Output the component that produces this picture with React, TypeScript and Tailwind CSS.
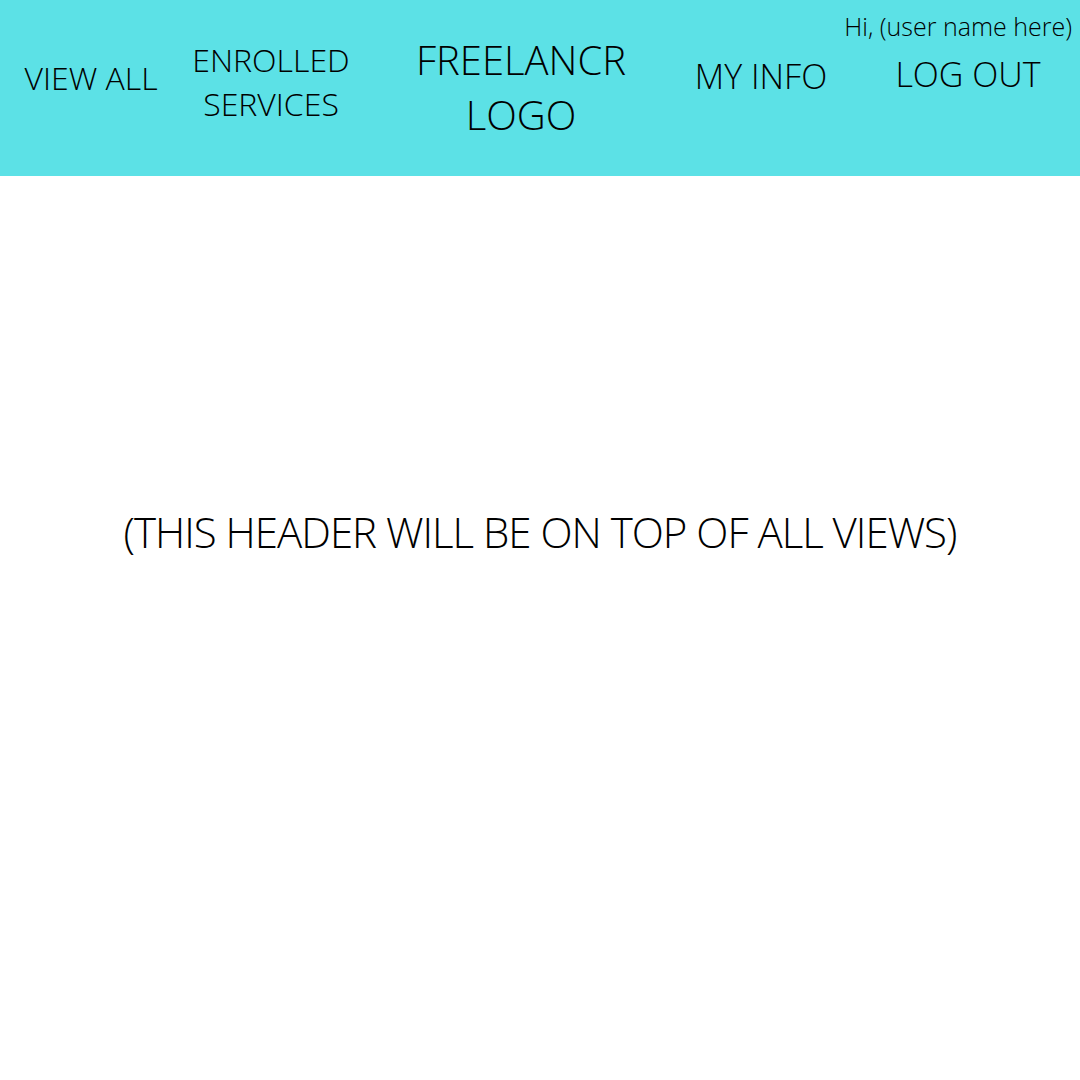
export default function App() {
  return (
    <div className="w-[1080px] h-[1080px] bg-white text-black font-light" style={{ fontFamily: '"Open Sans", "Liberation Sans", sans-serif' }}>
      <header className="relative h-[176px] bg-[#5ce1e6] flex items-start">
        <div className="absolute top-[14px] right-[8px] text-[25px] leading-none">Hi, (user name here)</div>
        <a className="w-[182px] pt-[62px] text-[32px] leading-none text-center">VIEW ALL</a>
        <a className="w-[178px] pt-[38px] text-[32px] leading-[44px] text-center">
          ENROLLED
          <br />
          SERVICES
        </a>
        <div className="w-[322px] pt-[32px] text-[40px] leading-[55px] text-center">
          FREELANCR
          <br />
          LOGO
        </div>
        <a className="w-[158px] pt-[59px] text-[34px] leading-none text-center">MY INFO</a>
        <a className="w-[176px] ml-[40px] pt-[57px] text-[34px] leading-none text-center">LOG OUT</a>
      </header>
      <main className="pt-[335px] text-center text-[42px] leading-none tracking-[-1px]">
        (THIS HEADER WILL BE ON TOP OF ALL VIEWS)
      </main>
    </div>
  );
}
